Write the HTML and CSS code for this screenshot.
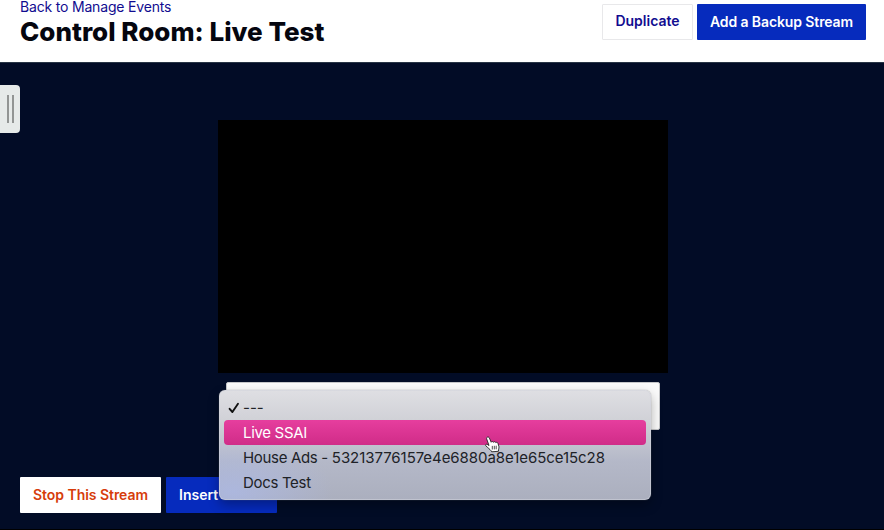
FILE: index.html
```html
<!DOCTYPE html>
<html lang="en">
<head>
<meta charset="utf-8">
<title>Control Room: Live Test</title>
<link rel="stylesheet" href="styles.css">
</head>
<body>
<header class="header">
  <div class="heading">
    <a class="back">Back to Manage Events</a>
    <h1 class="title">Control Room: Live Test</h1>
  </div>
  <div class="actions">
    <button class="btn btn-outline"><span>Duplicate</span></button>
    <button class="btn btn-primary btn-backup"><span>Add a Backup Stream</span></button>
  </div>
</header>
<main class="stage">
  <div class="drawer-handle"><i></i><i></i></div>
  <div class="player"></div>
  <div class="select-box"></div>
  <div class="controls">
    <button class="btn btn-stop"><span>Stop This Stream</span></button>
    <button class="btn btn-primary btn-insert"><span>Insert</span></button>
  </div>
  <ul class="menu">
    <li class="option"><svg class="check" width="12" height="12" viewBox="0 0 12 12"><path d="M1.6 6.8 4.4 10 10 1.8" fill="none" stroke="#111" stroke-width="1.9" stroke-linecap="round" stroke-linejoin="round"/></svg><span class="dashes">---</span></li>
    <li class="option selected"><span class="o-live">Live SSAI</span></li>
    <li class="option"><span class="o-house"><span class="o-name">House Ads - </span>53213776157e4e6880a8e1e65ce15c28</span></li>
    <li class="option"><span class="o-docs">Docs Test</span></li>
  </ul>
  <svg class="cursor" width="16" height="17" viewBox="0 0 16 17"><path d="M2.4 1.1C3.3.7 4 1.2 4.4 2.1L6.2 6.2C6.5 5.3 8 5.3 8.4 6.3 8.9 5.4 10.4 5.5 10.8 6.6 11.6 6 12.7 6.4 13 7.4L13.9 10.5C14.1 12 13.5 13 13.4 15.3L6.7 15.8C6 14.2 4.1 12.8 2.8 11.6L.9 9.9C.1 9 .9 7.9 2.1 8.3L4 9.5 1.7 3C1.4 2.1 1.6 1.4 2.4 1.1Z" fill="#fff" stroke="#222" stroke-width=".9" stroke-linejoin="round"/><path d="M7.3 9.9v3.6M9.3 9.8v3.6M11.2 9.7v3.6" stroke="#222" stroke-width=".8"/></svg>
</main>
</body>
</html>
```
FILE: styles.css
```css
* { box-sizing: border-box; }
body {
  margin: 0;
  width: 884px;
  height: 530px;
  overflow: hidden;
  background: #fff;
  font-family: "Inter", "Liberation Sans", sans-serif;
}
.header {
  display: flex;
  justify-content: space-between;
  height: 62px;
  padding: 0 18px 0 20px;
}
.heading { white-space: nowrap; }
.back {
  display: block;
  height: 14px;
  color: #110c90;
  font-size: 14px;
  line-height: 14px;
  letter-spacing: -0.18px;
}
.title {
  margin: 0;
  color: #05060f;
  font-size: 26px;
  line-height: 35px;
  font-weight: 800;
  letter-spacing: 0.01px;
}
.actions { display: flex; gap: 4px; padding-top: 4px; }
.btn {
  height: 36px;
  padding: 0;
  border: 0;
  border-radius: 1px;
  font: 600 14px/36px "Inter", "Liberation Sans", sans-serif;
  white-space: nowrap;
}
.btn-outline {
  width: 91px;
  border: 1px solid #e8e8ea;
  background: #fff;
  color: #110c90;
  line-height: 32px;
}
.btn-outline span { display: block; height: 34px; }
.btn-primary { background: #062bbd; color: #fff; }
.btn-backup { width: 169px; letter-spacing: -0.11px; }
.stage {
  position: relative;
  height: 468px;
  padding-top: 58px;
  border-top: 1px solid #283545;
  border-bottom: 1px solid #000;
  background: #020c26;
}
.drawer-handle {
  position: absolute;
  left: 0;
  top: 22px;
  width: 20px;
  height: 48px;
  display: flex;
  gap: 3px;
  padding: 10px 0 0 7px;
  border-radius: 0 4px 4px 0;
  background: #e6eae9;
}
.drawer-handle i { width: 2px; height: 28px; background: #929594; }
.player { width: 450px; height: 253px; margin-left: 218px; margin-top: -1px; background: #000; }
.select-box {
  width: 434px;
  height: 48px;
  margin: 9px 0 0 226px;
  border: 1px solid #c5c6c8;
  border-radius: 2px;
  background: #fafafa;
}
.controls { display: flex; gap: 5px; margin: 47px 0 0 20px; }
.btn-stop { width: 141px; background: #fff; color: #d63c0b; letter-spacing: -0.04px; }
.btn-insert { width: 111px; padding-left: 13px; text-align: left; }
.menu {
  position: absolute;
  left: 219px;
  top: 327px;
  width: 432px;
  height: 110px;
  margin: 0;
  padding: 5px;
  list-style: none;
  border-radius: 6px;
  background: radial-gradient(ellipse 100px 55px at 14px 102px, rgba(172, 185, 231, .75), transparent), linear-gradient(#dfdfe3, #cfd0d6 30%, #b4b8c8 65%, #abafbe);
  box-shadow: inset 0 0 0 1px rgba(210, 212, 221, .55), 0 0 1px #777, 0 5px 12px rgba(0, 0, 0, .3);
  color: #202227;
  font-size: 15px;
}
.option {
  display: flex;
  align-items: center;
  height: 25px;
  padding-left: 19px;
  white-space: nowrap;
}
.option:first-child { padding-left: 4px; }
.check { margin-right: 3px; }
.o-live, .o-docs { letter-spacing: -0.32px; }
.o-house { letter-spacing: -0.06px; }
.o-name { letter-spacing: -0.32px; }
.selected {
  border-radius: 4px;
  background: linear-gradient(#e63e9e, #d02c88);
  color: #fff;
}
.cursor { position: absolute; left: 485px; top: 373px; }
```
